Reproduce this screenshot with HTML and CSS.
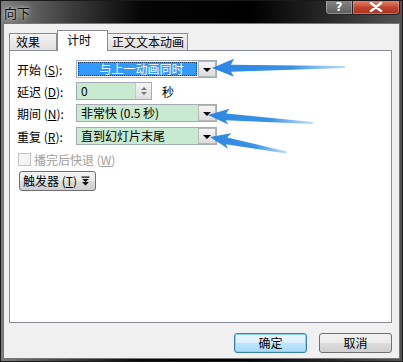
FILE: index.html
```html
<!DOCTYPE html>
<html lang="zh">
<head>
    <meta charset="UTF-8">
    <title>向下</title>
    <link rel="stylesheet" href="styles.css">
</head>
<body>
    <div class="window">
        <div class="titlebar">
            <span class="title">向下</span>
            <div class="caption-buttons">
                <span class="cap-btn help">?</span>
                <span class="cap-btn close">
                    <svg width="14" height="10" viewBox="0 0 14 10"><path d="M2 1 L12 9 M12 1 L2 9" stroke="#fff" stroke-width="2.6" stroke-linecap="round"/></svg>
                </span>
            </div>
        </div>

        <div class="client">
            <div class="tabs">
                <span class="tab tab-effect">效果</span>
                <span class="tab active tab-timing">计时</span>
                <span class="tab tab-text">正文文本动画</span>
            </div>

            <div class="panel">
                <div class="row">
                    <span class="label">开始 (<u>S</u>):</span>
                    <div class="combo focused">
                        <span class="combo-value">与上一动画同时</span>
                        <span class="drop"><i class="tri"></i></span>
                    </div>
                </div>
                <div class="row">
                    <span class="label">延迟 (<u>D</u>):</span>
                    <div class="spinner">
                        <span class="combo-value">0</span>
                        <span class="spin">
                            <i class="tri up"></i>
                            <i class="tri small"></i>
                        </span>
                    </div>
                    <span class="unit">秒</span>
                </div>
                <div class="row">
                    <span class="label">期间 (<u>N</u>):</span>
                    <div class="combo">
                        <span class="combo-value">非常快 (0.5 秒)</span>
                        <span class="drop"><i class="tri"></i></span>
                    </div>
                </div>
                <div class="row row-repeat">
                    <span class="label">重复 (<u>R</u>):</span>
                    <div class="combo">
                        <span class="combo-value">直到幻灯片末尾</span>
                        <span class="drop"><i class="tri"></i></span>
                    </div>
                </div>
                <div class="check-row">
                    <span class="checkbox"></span>
                    <span class="check-label">播完后快退 (<u>W</u>)</span>
                </div>
                <button class="trigger">
                    <span class="trigger-text">触发器 (<u>T</u>)</span>
                    <svg width="9" height="10" viewBox="0 0 9 10"><path d="M0.5 0.5 H8.5 V1.8 H0.5 Z M1 3 H8 L4.5 6 Z M1 6 H8 L4.5 9.5 Z" fill="#111"/></svg>
                </button>
            </div>

            <div class="footer">
                <button class="btn default">确定</button>
                <button class="btn">取消</button>
            </div>
        </div>

        <svg class="arrows" width="403" height="362" viewBox="0 0 403 362">
            <defs>
                <linearGradient id="fade" x1="0" y1="0" x2="1" y2="0">
                    <stop offset="0" stop-color="#2d86e2"/>
                    <stop offset="0.6" stop-color="#3a92e6"/>
                    <stop offset="1" stop-color="#8cc2f2" stop-opacity="0.6"/>
                </linearGradient>
            </defs>
            <path transform="translate(212 68) rotate(-0.4)" d="M0 0 L22 -9 L19 -3 L133 -1 L133 1 L19 4 L22 9 Z" fill="url(#fade)"/>
            <path transform="translate(208 115) rotate(4.4)" d="M0 0 L21 -8 L18 -3 L105 -1 L105 1 L18 4 L21 8 Z" fill="url(#fade)"/>
            <path transform="translate(210 137) rotate(11.5)" d="M0 0 L20 -8 L17 -3 L78 -1 L78 1 L17 4 L20 8 Z" fill="url(#fade)"/>
        </svg>
    </div>
</body>
</html>
```

FILE: styles.css
```css
body {
    margin: 0;
    font-family: "Noto Sans CJK SC", "Liberation Sans", sans-serif;
    font-size: 12px;
    color: #000;
    background-color: #fff;
}
.window {
    position: relative;
    width: 403px;
    height: 362px;
    box-sizing: border-box;
    display: flex;
    flex-direction: column;
    background: linear-gradient(to right, #7d7d7d 0, #3c3c3c 70px, #050505 140px, #000 250px, #2a2a2a 330px, #555 403px);
    border: 1px solid #1a1a1a;
    overflow: hidden;
}
.titlebar {
    height: 22px;
    display: flex;
    justify-content: space-between;
    flex-shrink: 0;
}
.title {
    padding: 3px 0 0 3px;
    font-size: 13px;
    line-height: 17px;
    color: #111;
    text-shadow: 0 0 6px #ddd, 0 0 3px #ccc;
}
.caption-buttons {
    display: flex;
    margin-right: 2px;
    height: 15px;
    margin-top: -1px;
}
.cap-btn {
    display: flex;
    align-items: center;
    justify-content: center;
    height: 14px;
    border: 1px solid #222;
    border-top: none;
    color: #fff;
    font-family: "DejaVu Sans", sans-serif;
    font-weight: bold;
    font-size: 12px;
}
.help {
    width: 26px;
    border-radius: 0 0 0 4px;
    background: linear-gradient(#8a8a8a, #5a5a5a);
    box-shadow: inset 0 0 0 1px rgba(255,255,255,0.3);
}
.close {
    width: 46px;
    border-left: none;
    border-radius: 0 0 4px 0;
    background: linear-gradient(#e58b72, #c0432a 55%, #a8301c);
    box-shadow: inset 0 0 0 1px rgba(255,200,180,0.4);
}
.client {
    flex: 1;
    margin: 0 2px 2px 2px;
    background-color: #f0f0f0;
    border: 1px solid #777;
    display: flex;
    flex-direction: column;
    padding: 7px 7px 0 5px;
}
.tabs {
    display: flex;
    align-items: flex-end;
    height: 19px;
    position: relative;
    z-index: 1;
}
.tab {
    box-sizing: border-box;
    height: 17px;
    border: 1px solid #898c95;
    border-bottom: none;
    background: linear-gradient(#f2f2f2, #e1e1e1);
    padding-left: 6px;
    line-height: 15px;
    font-size: 12px;
}
.tab-effect {
    width: 48px;
}
.tab-timing {
    width: 51px;
}
.tab-text {
    width: 80px;
    padding-left: 4px;
}
.tab.active {
    height: 21px;
    margin-bottom: -1px;
    background: #fff;
    padding-left: 9px;
    line-height: 17px;
}
.tab.active + .tab {
    border-left: none;
}
.panel {
    height: 273px;
    box-sizing: border-box;
    background: #fff;
    border: 1px solid #898c95;
    padding: 9px 0 0 7px;
    display: flex;
    flex-direction: column;
    align-items: flex-start;
}
.row {
    display: flex;
    align-items: center;
    height: 18px;
    margin-bottom: 4px;
}
.row-repeat {
    margin-top: 1px;
}
.label {
    width: 59px;
    flex-shrink: 0;
    white-space: nowrap;
}
.combo,
.spinner {
    box-sizing: border-box;
    height: 18px;
    border: 1px solid #a5acb5;
    background: #c8ead0;
    display: flex;
    align-items: center;
    position: relative;
}
.combo {
    width: 141px;
}
.spinner {
    width: 76px;
}
.combo-value {
    flex: 1;
    padding-left: 4px;
    line-height: 16px;
    white-space: nowrap;
}
.combo.focused {
    background: #fff;
    padding-left: 1px;
}
.combo.focused .combo-value {
    height: 14px;
    line-height: 14px;
    background: #3399ff;
    color: #fff;
    text-align: center;
    outline: 1px dotted #1a3c66;
    outline-offset: -1px;
    padding-left: 8px;
}
.drop {
    box-sizing: border-box;
    width: 18px;
    height: 16px;
    border: 1px solid #b7b7b7;
    background: linear-gradient(#f6f6f6, #dcdcdc);
    display: flex;
    align-items: center;
    justify-content: center;
    margin-left: 1px;
}
.tri {
    width: 0;
    height: 0;
    border-left: 4px solid transparent;
    border-right: 4px solid transparent;
    border-top: 4px solid #000;
    margin-top: 2px;
}
.spin {
    box-sizing: border-box;
    width: 16px;
    height: 16px;
    border-left: 1px solid #c8c8c8;
    background: linear-gradient(#f4f4f4, #dedede);
    display: flex;
    flex-direction: column;
    align-items: center;
    justify-content: center;
    gap: 2px;
}
.spin .tri {
    border-left-width: 3px;
    border-right-width: 3px;
    border-top: 3px solid #777;
    margin: 0;
}
.spin .tri.up {
    border-top: none;
    border-bottom: 3px solid #777;
}
.unit {
    margin-left: 10px;
}
.check-row {
    display: flex;
    align-items: center;
    margin-top: 3px;
    height: 15px;
    color: #a0a0a0;
    white-space: nowrap;
}
.checkbox {
    box-sizing: border-box;
    width: 13px;
    height: 13px;
    border: 1px solid #c4c4c4;
    background: #f4f4f4;
    margin: 0 3px 0 1px;
}
.trigger {
    margin-top: 4px;
    margin-left: 2px;
    width: 77px;
    height: 20px;
    box-sizing: border-box;
    border: 1px solid #707070;
    border-radius: 3px;
    background: linear-gradient(#f2f2f2 0, #ebebeb 50%, #dddddd 51%, #cfcfcf 100%);
    font-family: inherit;
    font-size: 12px;
    padding: 0 0 0 3px;
    display: flex;
    align-items: center;
    gap: 4px;
}
.trigger-text {
    white-space: nowrap;
    line-height: 16px;
}
.footer {
    display: flex;
    justify-content: flex-end;
    gap: 12px;
    margin-top: 10px;
    padding-right: 0;
}
.btn {
    width: 73px;
    height: 20px;
    box-sizing: border-box;
    border: 1px solid #707070;
    border-radius: 3px;
    background: linear-gradient(#f2f2f2 0, #ebebeb 50%, #dddddd 51%, #cfcfcf 100%);
    font-family: inherit;
    font-size: 12px;
    padding: 0;
    line-height: 16px;
}
.btn.default {
    border-color: #3c7fb1;
    background: linear-gradient(#eaf6fd 0, #d9f0fc 50%, #bee6fd 51%, #a7d9f5 100%);
    box-shadow: inset 0 0 0 1px #8fd0f0;
}
.arrows {
    position: absolute;
    left: -1px;
    top: -1px;
    pointer-events: none;
}
```
